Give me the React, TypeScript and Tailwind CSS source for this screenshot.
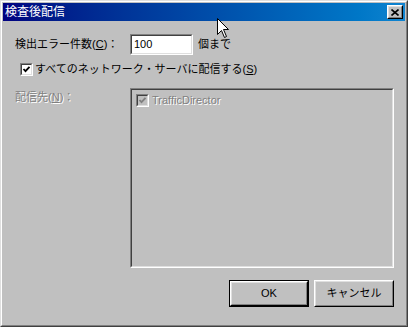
import type { ReactNode } from 'react';

// Win9x 風のくぼんだ枠（テキストボックス・チェックボックス・リスト）
function Sunken({ className, children }: { className: string; children?: ReactNode }) {
  return (
    <div className={`border border-t-[#808080] border-l-[#808080] border-b-white border-r-white ${className}`}>
      <div className="h-full w-full border border-t-[#404040] border-l-[#404040] border-b-[#dfdfdf] border-r-[#dfdfdf]">
        {children}
      </div>
    </div>
  );
}

function Check({ color }: { color: string }) {
  return (
    <svg width="9" height="9" viewBox="0 0 9 9" className="block">
      <polyline points="1.5,4 3.5,6.2 7.5,1.8" fill="none" stroke={color} strokeWidth="1.8" />
    </svg>
  );
}

function CheckBox({ disabled }: { disabled?: boolean }) {
  return (
    <Sunken className="h-[13px] w-[13px] shrink-0">
      <div className={`flex h-full w-full items-center justify-center ${disabled ? 'bg-[#c0c0c0]' : 'bg-white'}`}>
        <Check color={disabled ? '#808080' : '#000000'} />
      </div>
    </Sunken>
  );
}

function Button({ label, isDefault }: { label: string; isDefault?: boolean }) {
  const face = (
    <div className="h-full w-full border border-t-white border-l-white border-b-black border-r-black">
      <div className="flex h-full w-full items-center justify-center border border-t-[#dfdfdf] border-l-[#dfdfdf] border-b-[#808080] border-r-[#808080]">
        {label}
      </div>
    </div>
  );
  return (
    <div className={`h-[27px] w-[80px] ${isDefault ? 'border border-black' : ''}`}>{face}</div>
  );
}

function CloseButton() {
  return (
    <div className="h-[14px] w-[16px] border border-t-white border-l-white border-b-black border-r-black bg-[#c0c0c0]">
      <div className="flex h-full w-full items-center justify-center border border-t-[#dfdfdf] border-l-[#dfdfdf] border-b-[#808080] border-r-[#808080]">
        <svg width="8" height="7" viewBox="0 0 8 7" className="block">
          <path d="M0.5 0.5 L7.5 6.5 M7.5 0.5 L0.5 6.5" stroke="#000" strokeWidth="1.6" />
        </svg>
      </div>
    </div>
  );
}

function Cursor() {
  return (
    <svg width="13" height="21" viewBox="0 0 13 21" className="pointer-events-none absolute left-[217px] top-[18px]">
      <path d="M0.5 0.5 L0.5 16.5 L4.5 12.5 L7.5 19.5 L9.5 18.5 L6.5 11.5 L11.5 11.5 Z" fill="#fff" stroke="#000" strokeWidth="1" />
    </svg>
  );
}

export default function App() {
  return (
    <div className="relative h-[327px] w-[408px] overflow-hidden bg-[#c0c0c0] font-['Liberation_Sans','Noto_Sans_CJK_JP',sans-serif] text-[11px] leading-[13px] text-black">
      <div className="h-full border border-t-[#dfdfdf] border-l-[#dfdfdf] border-b-[#404040] border-r-[#404040]">
        <div className="flex h-full flex-col border border-t-white border-l-white border-b-[#808080] border-r-[#808080] p-px">
          {/* タイトルバー */}
          <div className="flex h-[18px] shrink-0 items-center justify-between bg-gradient-to-r from-[#000080] to-[#1084d0] pl-[2px] pr-[2px]">
            <span className="text-[12px] leading-none text-white">検査後配信</span>
            <CloseButton />
          </div>

          <div className="flex flex-1 flex-col pl-[12px] pr-[11px]">
            {/* 検出エラー件数 */}
            <div className="mt-[13px] flex items-center">
              <span className="w-[115px]">
                検出エラー件数(<span className="underline">C</span>)：
              </span>
              <Sunken className="h-[21px] w-[63px] bg-white">
                <div className="flex h-full items-center bg-white pl-[2px]">100</div>
              </Sunken>
              <span className="ml-[5px]">個まで</span>
            </div>

            {/* すべてのサーバに配信 */}
            <div className="ml-[5px] mt-[8px] flex items-center">
              <CheckBox />
              <span className="ml-[2px]">
                すべてのネットワーク・サーバに配信する(<span className="underline">S</span>)
              </span>
            </div>

            {/* 配信先リスト */}
            <div className="mt-[12px] flex">
              <span className="w-[115px] pt-[3px] text-[#808080] [text-shadow:1px_1px_0_#ffffff]">
                配信先(<span className="underline">N</span>)：
              </span>
              <Sunken className="h-[180px] w-[264px]">
                <div className="flex items-center pl-[4px] pt-[4px]">
                  <CheckBox disabled />
                  <span className="ml-[3px] text-[#808080] [text-shadow:1px_1px_0_#ffffff]">TrafficDirector</span>
                </div>
              </Sunken>
            </div>

            {/* ボタン */}
            <div className="mt-[12px] flex justify-end gap-[5px]">
              <Button label="OK" isDefault />
              <Button label="キャンセル" />
            </div>
          </div>
        </div>
      </div>
      <Cursor />
    </div>
  );
}
